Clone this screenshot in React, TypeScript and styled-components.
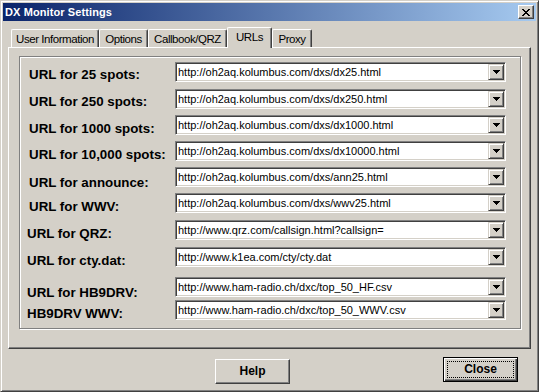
import React from 'react';
import styled, { createGlobalStyle } from 'styled-components';

const GlobalStyle = createGlobalStyle`
  html, body { margin: 0; padding: 0; background: #D4D0C8; }
  body { font-family: "Liberation Sans", Arial, sans-serif; }
`;

const Window = styled.div`
  width: 539px;
  height: 392px;
  box-sizing: border-box;
  background: #d4d0c8;
  border: 1px solid;
  border-color: #d4d0c8 #404040 #404040 #d4d0c8;
  box-shadow: inset 1px 1px 0 #ffffff, inset -1px -1px 0 #808080;
  padding: 2px;
  display: flex;
  flex-direction: column;
`;

const TitleBar = styled.div`
  flex: none;
  height: 18px;
  display: flex;
  align-items: center;
  justify-content: space-between;
  padding: 0 2px;
  background: linear-gradient(to right, #0a246a, #a6caf0);
`;

const TitleText = styled.span`
  color: #ffffff;
  font: bold 11px "Liberation Sans", Arial, sans-serif;
  letter-spacing: 0.1px;
`;

const CaptionButton = styled.div`
  width: 16px;
  height: 14px;
  box-sizing: border-box;
  background: #d4d0c8;
  border: 1px solid;
  border-color: #ffffff #404040 #404040 #ffffff;
  box-shadow: inset -1px -1px 0 #808080;
  display: flex;
  align-items: center;
  justify-content: center;
`;

const TabStrip = styled.div`
  flex: none;
  height: 20px;
  margin-top: 6px;
  padding-left: 8px;
  display: flex;
  align-items: flex-end;
  position: relative;
  z-index: 1;
`;

const Tab = styled.div<{ $w: number; $active?: boolean }>`
  width: ${(p) => p.$w}px;
  height: ${(p) => (p.$active ? 21 : 18)}px;
  margin-bottom: ${(p) => (p.$active ? -1 : 0)}px;
  box-sizing: border-box;
  background: #d4d0c8;
  border-left: 1px solid #ffffff;
  border-top: 1px solid #ffffff;
  border-right: 1px solid #404040;
  border-top-left-radius: 2px;
  border-top-right-radius: 2px;
  box-shadow: inset -1px 0 0 #808080;
  display: flex;
  align-items: center;
  justify-content: center;
  padding-bottom: ${(p) => (p.$active ? 3 : 0)}px;
  font: 11.5px "Liberation Sans", Arial, sans-serif;
  letter-spacing: -0.45px;
  color: #000;
  white-space: nowrap;
`;

const Panel = styled.div`
  flex: none;
  margin-left: 5px;
  width: 523px;
  height: 302px;
  box-sizing: border-box;
  border: 1px solid;
  border-color: #ffffff #404040 #404040 #ffffff;
  box-shadow: inset -1px -1px 0 #808080;
  padding: 8px 0 0 10px;
`;

const GroupBox = styled.div`
  width: 502px;
  height: 273px;
  box-sizing: border-box;
  border: 1px solid #808080;
  box-shadow: inset 1px 1px 0 #ffffff, 1px 1px 0 #ffffff;
  padding-top: 5px;
  display: flex;
  flex-direction: column;
`;

const Row = styled.div<{ $mt: number }>`
  display: flex;
  align-items: flex-start;
  height: 20px;
  margin-top: ${(p) => p.$mt}px;
`;

const Label = styled.label<{ $indent: number; $dy: number }>`
  width: 155px;
  box-sizing: border-box;
  padding-left: ${(p) => p.$indent}px;
  margin-top: ${(p) => p.$dy}px;
  font: bold 13.33px/16px "Liberation Sans", Arial, sans-serif;
  color: #000;
  white-space: nowrap;
`;

const Combo = styled.div`
  width: 331px;
  height: 20px;
  box-sizing: border-box;
  background: #ffffff;
  border: 1px solid;
  border-color: #808080 #ffffff #ffffff #808080;
  box-shadow: inset 1px 1px 0 #404040, inset -1px -1px 0 #d4d0c8;
  padding: 1px;
  display: flex;
  align-items: center;
`;

const ComboText = styled.span`
  flex: 1;
  padding-left: 1px;
  font: 11px/16px "Liberation Sans", Arial, sans-serif;
  color: #000;
  white-space: nowrap;
  overflow: hidden;
`;

const DropButton = styled.div`
  width: 16px;
  height: 16px;
  box-sizing: border-box;
  background: #d4d0c8;
  border: 1px solid;
  border-color: #d4d0c8 #404040 #404040 #d4d0c8;
  box-shadow: inset 1px 1px 0 #ffffff, inset -1px -1px 0 #808080;
  display: flex;
  align-items: center;
  justify-content: center;
  flex: none;
`;

const Footer = styled.div`
  display: flex;
  align-items: flex-start;
  padding-left: 212px;
`;

const Button = styled.div<{ $mt: number; $ml?: number; $default?: boolean }>`
  width: 75px;
  height: 25px;
  box-sizing: border-box;
  margin-top: ${(p) => p.$mt}px;
  margin-left: ${(p) => p.$ml ?? 0}px;
  background: #d4d0c8;
  border: 1px solid;
  border-color: ${(p) => (p.$default ? '#000000' : '#ffffff #404040 #404040 #ffffff')};
  box-shadow: ${(p) =>
    p.$default
      ? 'inset 1px 1px 0 #ffffff, inset -1px -1px 0 #404040, inset -2px -2px 0 #808080'
      : 'inset -1px -1px 0 #808080'};
  display: flex;
  align-items: center;
  justify-content: center;
  padding-bottom: 2px;
  font: bold 12px "Liberation Sans", Arial, sans-serif;
  color: #000;
  position: relative;
`;

const FocusRing = styled.span`
  position: absolute;
  left: 3px;
  top: 3px;
  right: 3px;
  bottom: 3px;
  border: 1px dotted #000;
  pointer-events: none;
`;

const DownArrow = () => (
  <svg width="7" height="4" viewBox="0 0 7 4">
    <path d="M0 0h7v1H0zM1 1h5v1H1zM2 2h3v1H2zM3 3h1v1H3z" fill="#000" />
  </svg>
);

const CloseGlyph = () => (
  <svg width="8" height="7" viewBox="0 0 8 7">
    <path
      d="M0 0h2v1H0zM6 0h2v1H6zM1 1h2v1H1zM5 1h2v1H5zM2 2h4v1H2zM3 3h2v1H3zM2 4h4v1H2zM1 5h2v1H1zM5 5h2v1H5zM0 6h2v1H0zM6 6h2v1H6z"
      fill="#000"
    />
  </svg>
);

const tabs = [
  { label: 'User Information', w: 88 },
  { label: 'Options', w: 49 },
  { label: 'Callbook/QRZ', w: 79 },
  { label: 'URLs', w: 45, active: true },
  { label: 'Proxy', w: 40 },
];

const rows = [
  { label: 'URL for 25 spots:', url: 'http://oh2aq.kolumbus.com/dxs/dx25.html', mt: 0, indent: 9, dy: 5 },
  { label: 'URL for 250 spots:', url: 'http://oh2aq.kolumbus.com/dxs/dx250.html', mt: 7, indent: 9, dy: 5 },
  { label: 'URL for 1000 spots:', url: 'http://oh2aq.kolumbus.com/dxs/dx1000.html', mt: 6, indent: 9, dy: 6 },
  { label: 'URL for 10,000 spots:', url: 'http://oh2aq.kolumbus.com/dxs/dx10000.html', mt: 6, indent: 9, dy: 6 },
  { label: 'URL for announce:', url: 'http://oh2aq.kolumbus.com/dxs/ann25.html', mt: 6, indent: 9, dy: 8 },
  { label: 'URL for WWV:', url: 'http://oh2aq.kolumbus.com/dxs/wwv25.html', mt: 6, indent: 9, dy: 6 },
  { label: 'URL for QRZ:', url: 'http://www.qrz.com/callsign.html?callsign=', mt: 7, indent: 7, dy: 6 },
  { label: 'URL for cty.dat:', url: 'http://www.k1ea.com/cty/cty.dat', mt: 7, indent: 7, dy: 6 },
  { label: 'URL for HB9DRV:', url: 'http://www.ham-radio.ch/dxc/top_50_HF.csv', mt: 10, indent: 7, dy: 8 },
  { label: 'HB9DRV WWV:', url: 'http://www.ham-radio.ch/dxc/top_50_WWV.csv', mt: 3, indent: 7, dy: 6 },
];

export default function App() {
  return (
    <>
      <GlobalStyle />
      <Window>
        <TitleBar>
          <TitleText>DX Monitor Settings</TitleText>
          <CaptionButton>
            <CloseGlyph />
          </CaptionButton>
        </TitleBar>
        <TabStrip>
          {tabs.map((t) => (
            <Tab key={t.label} $w={t.w} $active={t.active}>
              {t.label}
            </Tab>
          ))}
        </TabStrip>
        <Panel>
          <GroupBox>
            {rows.map((r) => (
              <Row key={r.label} $mt={r.mt}>
                <Label $indent={r.indent} $dy={r.dy}>
                  {r.label}
                </Label>
                <Combo>
                  <ComboText>{r.url}</ComboText>
                  <DropButton>
                    <DownArrow />
                  </DropButton>
                </Combo>
              </Row>
            ))}
          </GroupBox>
        </Panel>
        <Footer>
          <Button $mt={10}>Help</Button>
          <Button $mt={8} $ml={153} $default>
            Close
            <FocusRing />
          </Button>
        </Footer>
      </Window>
    </>
  );
}
